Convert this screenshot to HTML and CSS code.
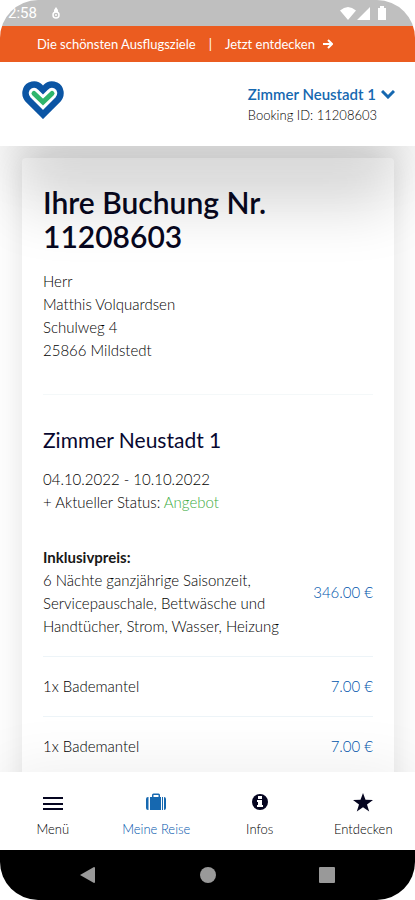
FILE: index.html
```html
<!DOCTYPE html>
<html lang="de">
<head>
<meta charset="utf-8">
<meta name="viewport" content="width=device-width, initial-scale=1">
<title>Meine Reise</title>
<link rel="stylesheet" href="styles.css">
</head>
<body>
<div class="screen">
  <div class="status">
    <span class="clock">2:58</span>
    <svg class="status-app" width="10" height="14" viewBox="0 0 10 14" aria-hidden="true"><circle cx="5" cy="9" r="3" fill="none" stroke="currentColor" stroke-width="1.500"/><path d="M5 1l2 3v2H3V4z" fill="currentColor"/><circle cx="5" cy="9" r="1" fill="currentColor"/></svg>
    <svg class="signals" width="47" height="15" viewBox="0 0 47 15" aria-hidden="true"><path d="M0 4.500Q8-2.500 16 4.500L8 14zM30 1v13H17zM38 2h2V0h4v2h2v12h-8z" fill="currentColor"/></svg>
  </div>
  <a class="banner" href="#ausflug">
    <span>Die schönsten Ausflugsziele</span>
    <span class="bar">|</span>
    <span>Jetzt entdecken</span>
    <svg width="10" height="10" viewBox="0 0 10 10" aria-hidden="true"><path d="M0 5h8M5 1l4 4-4 4" fill="none" stroke="currentColor" stroke-width="2"/></svg>
  </a>
  <header class="header">
    <a class="logo" href="#start" aria-label="Startseite">
      <svg width="42" height="38" viewBox="0 0 42 38" aria-hidden="true"><path d="M21 33.500 6 18.500C2 14 3 7 8 4.500c4-1.800 8-.7 10.500 2L21 9l2.500-2.500C26 3.800 30 2.700 34 4.500c5 2.500 6 9.500 2 14z" fill="#fff" stroke="#0b55a4" stroke-width="6.500" stroke-linejoin="miter"/><path d="M12 12.500l9 8.500 9-8.500" fill="none" stroke="#2fb56c" stroke-width="5" stroke-linecap="round"/></svg>
    </a>
    <button class="booking" type="button">
      <span class="booking-name">Zimmer Neustadt 1
        <svg width="14" height="9" viewBox="0 0 14 9" aria-hidden="true"><path d="M1 1l6 6 6-6" fill="none" stroke="currentColor" stroke-width="3"/></svg>
      </span>
      <span class="booking-id">Booking ID: 11208603</span>
    </button>
  </header>
  <main class="content">
    <article class="card">
      <h1>Ihre Buchung Nr. 11208603</h1>
      <address>Herr<br>Matthis Volquardsen<br>Schulweg 4<br>25866 Mildstedt</address>
      <section class="stay">
        <h2>Zimmer Neustadt 1</h2>
        <p>04.10.2022 - 10.10.2022<br>+ Aktueller Status: <span class="offer">Angebot</span></p>
        <ul>
          <li><span class="item"><strong>Inklusivpreis:</strong><br>6 Nächte ganzjährige Saisonzeit, Servicepauschale, Bettwäsche und Handtücher, Strom, Wasser, Heizung</span><span class="price">346.00 €</span></li>
          <li><span class="item">1x Bademantel</span><span class="price">7.00 €</span></li>
          <li><span class="item">1x Bademantel</span><span class="price">7.00 €</span></li>
        </ul>
      </section>
    </article>
  </main>
  <nav class="tabs">
    <a href="#menu"><svg width="20" height="20" viewBox="0 0 20 20" aria-hidden="true"><path d="M0 5h20M0 11h20M0 16h20" stroke="currentColor" stroke-width="2"/></svg>Menü</a>
    <a class="active" href="#reise"><svg width="20" height="20" viewBox="0 0 20 20" aria-hidden="true"><path d="M2.500 4v13H2a2 2 0 0 1-2-2V6a2 2 0 0 1 2-2zM4 4h2V2q0-1.500 1.500-1.500h5Q14 .5 14 2v2h1v13H4zM7.500 4h5V2h-5zM16 4h1v13h-1zM18 4a2 2 0 0 1 2 2v9a2 2 0 0 1-2 2z" fill="currentColor" fill-rule="evenodd"/></svg>Meine Reise</a>
    <a href="#infos"><svg width="20" height="20" viewBox="0 0 20 20" aria-hidden="true"><circle cx="10" cy="9" r="8" fill="currentColor"/><path d="M8 3h4v3H8zM7 7h5v5h1v2H7v-2h1V9H7z" fill="#fff"/></svg>Infos</a>
    <a href="#entdecken"><svg width="20" height="20" viewBox="0 0 20 20" aria-hidden="true"><path d="M10 0l2.500 6.700 7.500.2-6 4.500 2.200 7.100L10 14.300l-6.200 4.200L6 11.400 0 6.900l7.500-.2z" fill="currentColor"/></svg>Entdecken</a>
  </nav>
  <div class="system">
    <button type="button" aria-label="Zurück"><svg width="18" height="18" viewBox="0 0 18 18"><path d="M1 9L15 1q1 0 1 1v14q0 1-1 1z" fill="currentColor"/></svg></button>
    <button type="button" aria-label="Startbildschirm"><svg width="18" height="18" viewBox="0 0 18 18"><circle cx="9" cy="9" r="8" fill="currentColor"/></svg></button>
    <button type="button" aria-label="Übersicht"><svg width="18" height="18" viewBox="0 0 18 18"><rect x="1" y="1" width="16" height="16" rx="1" fill="currentColor"/></svg></button>
  </div>
</div>
</body>
</html>
```
FILE: styles.css
```css
* { box-sizing: border-box; }
body { margin: 0; background: #fff; font-family: Lato, sans-serif; font-size: 15px; line-height: 23px; font-weight: 300; font-variant-ligatures: none; color: #000; }
a { color: inherit; text-decoration: none; }
button { padding: 0; border: 0; background: none; font: inherit; color: inherit; }
svg { display: block; }
h1, h2, p, ul { margin: 0; padding: 0; }
.screen { display: flex; flex-direction: column; height: 100vh; overflow: hidden; border-radius: 38px; }
.status { display: flex; align-items: center; padding: 0 28px 0 8px; height: 26px; background: #bfbfbf; color: #fff; font-family: Roboto, sans-serif; font-size: 15px; font-weight: 400; }
.status-app { margin-left: 14px; }
.signals { margin-left: auto; }
.banner { display: flex; align-items: center; gap: 8px; height: 36px; padding: 0 37px; background: #eb5c20; color: #fff; font-size: 13px; font-weight: 400; font-variant-ligatures: normal; }
.bar { padding: 0 5px; }
.header { position: relative; z-index: 1; display: flex; align-items: center; justify-content: space-between; height: 84px; padding: 0 20px 0 22px; background: #fff; box-shadow: 0 78px 60px -20px rgba(0, 0, 0, 0.18), 0 20px 60px -10px rgba(0, 0, 0, 0.16); }
.banner, .status { position: relative; z-index: 2; }
.logo { padding-bottom: 8px; }
.booking { display: flex; flex-direction: column; text-align: left; padding-top: 2px; }
.booking-name { display: flex; align-items: center; gap: 5px; color: #1668b0; font-weight: 600; line-height: 21px; }
.booking-id { font-size: 13px; line-height: 21px; }
.content { flex: 1; min-height: 0; overflow: hidden; padding: 12px 21px 12px 22px; background: #fdfdfd; }
.card { padding: 27px 21px 28px; background: #fff; border-radius: 4px; box-shadow: 0 0 28px rgba(0, 0, 0, 0.1); }
h1 { font-size: 30px; line-height: 34px; font-weight: 600; color: #080820; }
address { margin-top: 17px; font-style: normal; }
.stay { margin-top: 32px; padding-top: 31px; border-top: 1px solid #f4f8f9; }
h2 { font-size: 21px; line-height: 28px; font-weight: 400; color: #080830; }
p { margin-top: 14px; }
.offer { color: #3cab42; }
ul { margin-top: 14px; list-style: none; }
li { display: flex; align-items: center; justify-content: space-between; gap: 24px; padding: 18px 0; border-bottom: 1px solid #edf4f8; }
strong { color: #181818; font-weight: 700; }
.price { flex: none; color: #0055ac; }
.tabs { position: relative; z-index: 1; display: grid; grid-template-columns: repeat(4, 1fr); height: 78px; padding-left: 1px; background: #fff; box-shadow: 0 0 64px rgba(0, 0, 0, 0.08); }
.tabs a { display: flex; flex-direction: column; align-items: center; gap: 6px; padding-top: 21px; font-size: 13px; line-height: 20px; }
.tabs svg { color: #050520; }
.tabs .active { color: #0055ac; }
.tabs .active svg { color: #1668b0; }
.system { position: relative; z-index: 2; display: flex; align-items: center; justify-content: space-between; height: 50px; padding: 0 79px; background: #000; color: #999; }
```
